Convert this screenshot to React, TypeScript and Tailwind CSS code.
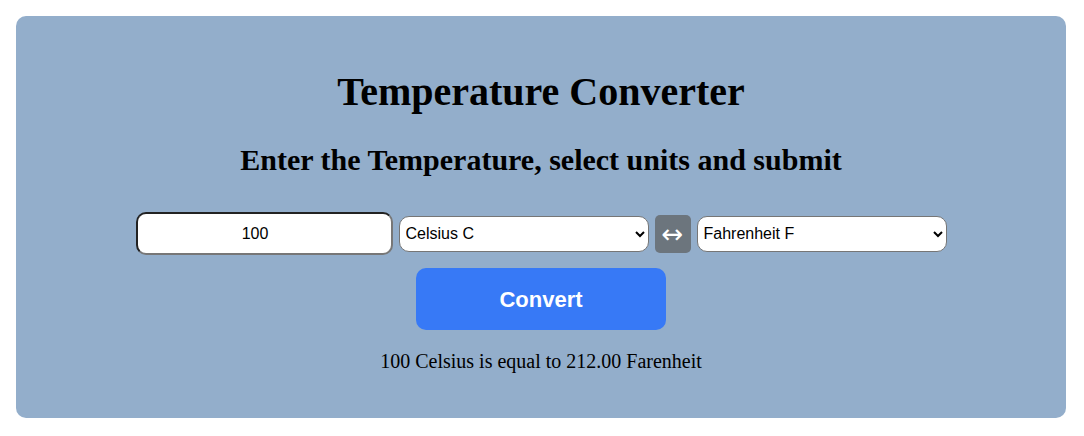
export default function App() {
  return (
    <div className="min-h-[436px] bg-white pt-4 pl-4" style={{ fontFamily: '"Liberation Serif", serif' }}>
      <div className="flex w-[1050px] flex-col items-center rounded-[10px] bg-[#93aecb] pt-[53px] pb-[45px] text-black">
        <h1 className="m-0 text-[40px] font-bold leading-[46px]">Temperature Converter</h1>
        <h2 className="mt-[28px] text-[30px] font-bold leading-[34px]">
          Enter the Temperature, select units and submit
        </h2>
        <div
          className="mt-[35px] flex items-center gap-[6px]"
          style={{ fontFamily: '"Liberation Sans", Arial, sans-serif' }}
        >
          <input
            defaultValue="100"
            className="h-[43px] w-[257px] rounded-[10px] border-2 border-t-[#222] border-l-[#222] border-b-[#777] border-r-[#777] bg-white pr-[18px] text-center text-base text-black outline-none"
          />
          <select className="h-[36px] w-[250px] rounded-[10px] border border-[#767676] bg-white pl-[2px] text-base text-black">
            <option>Celsius C</option>
            <option>Fahrenheit F</option>
          </select>
          <button
            className="h-[38px] w-[36px] rounded-[5px] bg-[#6c757d] text-[26px] leading-none text-white"
            style={{ fontFamily: '"DejaVu Sans", sans-serif' }}
          >
            ↔
          </button>
          <select className="h-[36px] w-[250px] rounded-[10px] border border-[#767676] bg-white pl-[2px] text-base text-black">
            <option>Fahrenheit F</option>
            <option>Celsius C</option>
          </select>
        </div>
        <button
          className="mt-[13px] h-[62px] w-[250px] rounded-[10px] bg-[#3779f6] text-[22px] font-bold text-white"
          style={{ fontFamily: '"Liberation Sans", Arial, sans-serif' }}
        >
          Convert
        </button>
        <p className="mt-[20px] text-[20px] leading-[23px]">100 Celsius is equal to 212.00 Farenheit</p>
      </div>
    </div>
  );
}
